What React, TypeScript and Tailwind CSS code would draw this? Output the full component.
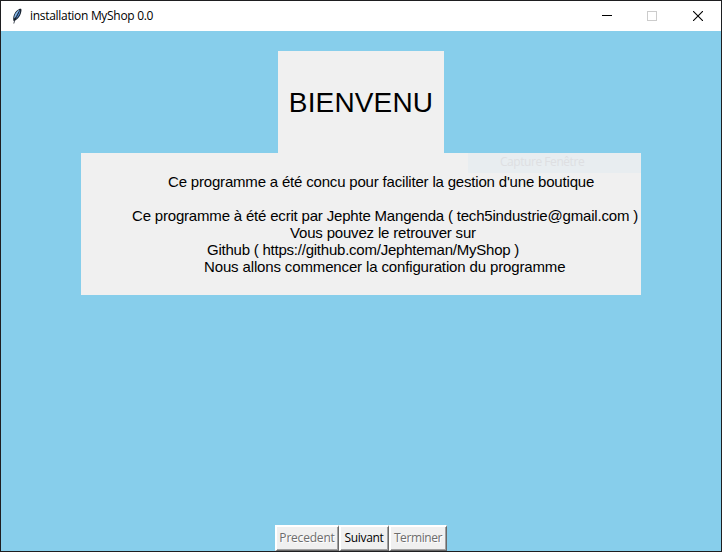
import type { ReactNode } from "react";

const lines = [
  { text: "Ce programme a été concu pour faciliter la gestion d'une boutique", className: "pl-[87px] tracking-[-0.185px]" },
  { text: "\u00a0", className: "" },
  { text: "Ce programme à été ecrit par Jephte Mangenda ( tech5industrie@gmail.com )", className: "pl-[51px] tracking-[-0.187px]" },
  { text: "Vous pouvez le retrouver sur", className: "pl-[209px] tracking-[-0.18px]" },
  { text: "Github ( https://github.com/Jephteman/MyShop )", className: "pl-[126px] tracking-[-0.23px]" },
  { text: "Nous allons commencer la configuration du programme", className: "pl-[123px] tracking-[-0.14px]" },
];

function Feather() {
  return (
    <svg width="16" height="16" viewBox="0 0 16 16" className="shrink-0">
      <path d="M4.500 13C3.600 9.500 5 4.800 8.300 2.200 9.600 1.100 11.600.300 12.300 1c.5 1-.1 4.300-1.300 6.600C9.800 10 7.500 12.200 5.500 12.800Z" fill="#17202c" />
      <path d="M5.200 10.500C5 7.500 6.600 4.400 9.300 2.300L10.500 2 7.200 9Z" fill="#8abbed" />
      <path d="M6.800 11 11 2.300C11.700 4.500 10 8.900 6.800 11Z" fill="#4f86cc" />
      <path d="M4.800 15.500 6.200 10.500 10 3.500" fill="none" stroke="#17202c" strokeWidth="0.8" />
    </svg>
  );
}

function WizardButton({ children, disabled, className }: { children: ReactNode; disabled?: boolean; className: string }) {
  return (
    <button
      disabled={disabled}
      className={`h-[26px] shrink-0 whitespace-nowrap border-t-2 border-r border-b border-l-2 border-t-white border-l-white border-r-[#696969] border-b-[#696969] bg-[#f0f0f0] pr-px pb-[2px] text-center text-[12px] leading-[20px] shadow-[inset_-1px_-1px_0_#a0a0a0] ${disabled ? "text-[#6d6d6d] [text-shadow:1px_1px_0_white]" : "text-black"} ${className}`}
    >
      {children}
    </button>
  );
}

export default function App() {
  return (
    <div className="flex h-[552px] w-[722px] flex-col overflow-hidden border border-[#1e1e20] bg-[#87ceeb] font-['Open_Sans','Noto_Sans',sans-serif] text-black">
      <header className="flex h-[30px] shrink-0 items-center bg-white pl-2">
        <Feather />
        <span className="ml-[5px] text-[12px] leading-[16px] tracking-[-0.3px] whitespace-nowrap">installation MyShop 0.0</span>
        <div className="ml-auto flex h-full">
          <span className="flex w-[45px] items-center justify-center">
            <svg width="10" height="10" shapeRendering="crispEdges"><path d="M0 4.500H10" stroke="black" /></svg>
          </span>
          <span className="flex w-[46px] items-center justify-center">
            <svg width="10" height="10" shapeRendering="crispEdges"><rect x=".5" y=".5" width="9" height="9" fill="none" stroke="#ccc" /></svg>
          </span>
          <span className="flex w-[46px] items-center justify-center">
            <svg width="10" height="10"><path d="M0 0 10 10M10 0 0 10" stroke="black" strokeWidth="1.1" /></svg>
          </span>
        </div>
      </header>
      <main className="flex min-h-0 flex-1 flex-col pt-5">
        <h1 className="ml-[277px] flex h-[102px] w-[166px] shrink-0 items-center justify-center bg-[#f0f0f0] pt-[2px] font-['Liberation_Sans',sans-serif] text-[28px] leading-none tracking-[0.15px]">
          BIENVENU
        </h1>
        <section className="relative ml-20 h-[142px] w-[560px] shrink-0 bg-[#f0f0f0] pt-5">
          <div className="absolute top-0 right-0 h-5 w-[173px] bg-[#e8edf0] pl-8 text-[12px] leading-[18px] tracking-[-0.45px] text-[#dedfe2]">Capture Fenêtre</div>
          <div className="relative font-['Liberation_Sans',sans-serif] text-[15px] leading-[17px] whitespace-nowrap">
            {lines.map((line, i) => (
              <p key={i} className={line.className}>{line.text}</p>
            ))}
          </div>
        </section>
        <footer className="mt-auto ml-[274px] flex">
          <WizardButton disabled className="w-16 tracking-[-0.2px]">Precedent</WizardButton>
          <WizardButton className="w-[50px] tracking-[-0.3px]">Suivant</WizardButton>
          <WizardButton disabled className="w-[58px] tracking-[-0.4px]">Terminer</WizardButton>
        </footer>
      </main>
    </div>
  );
}
